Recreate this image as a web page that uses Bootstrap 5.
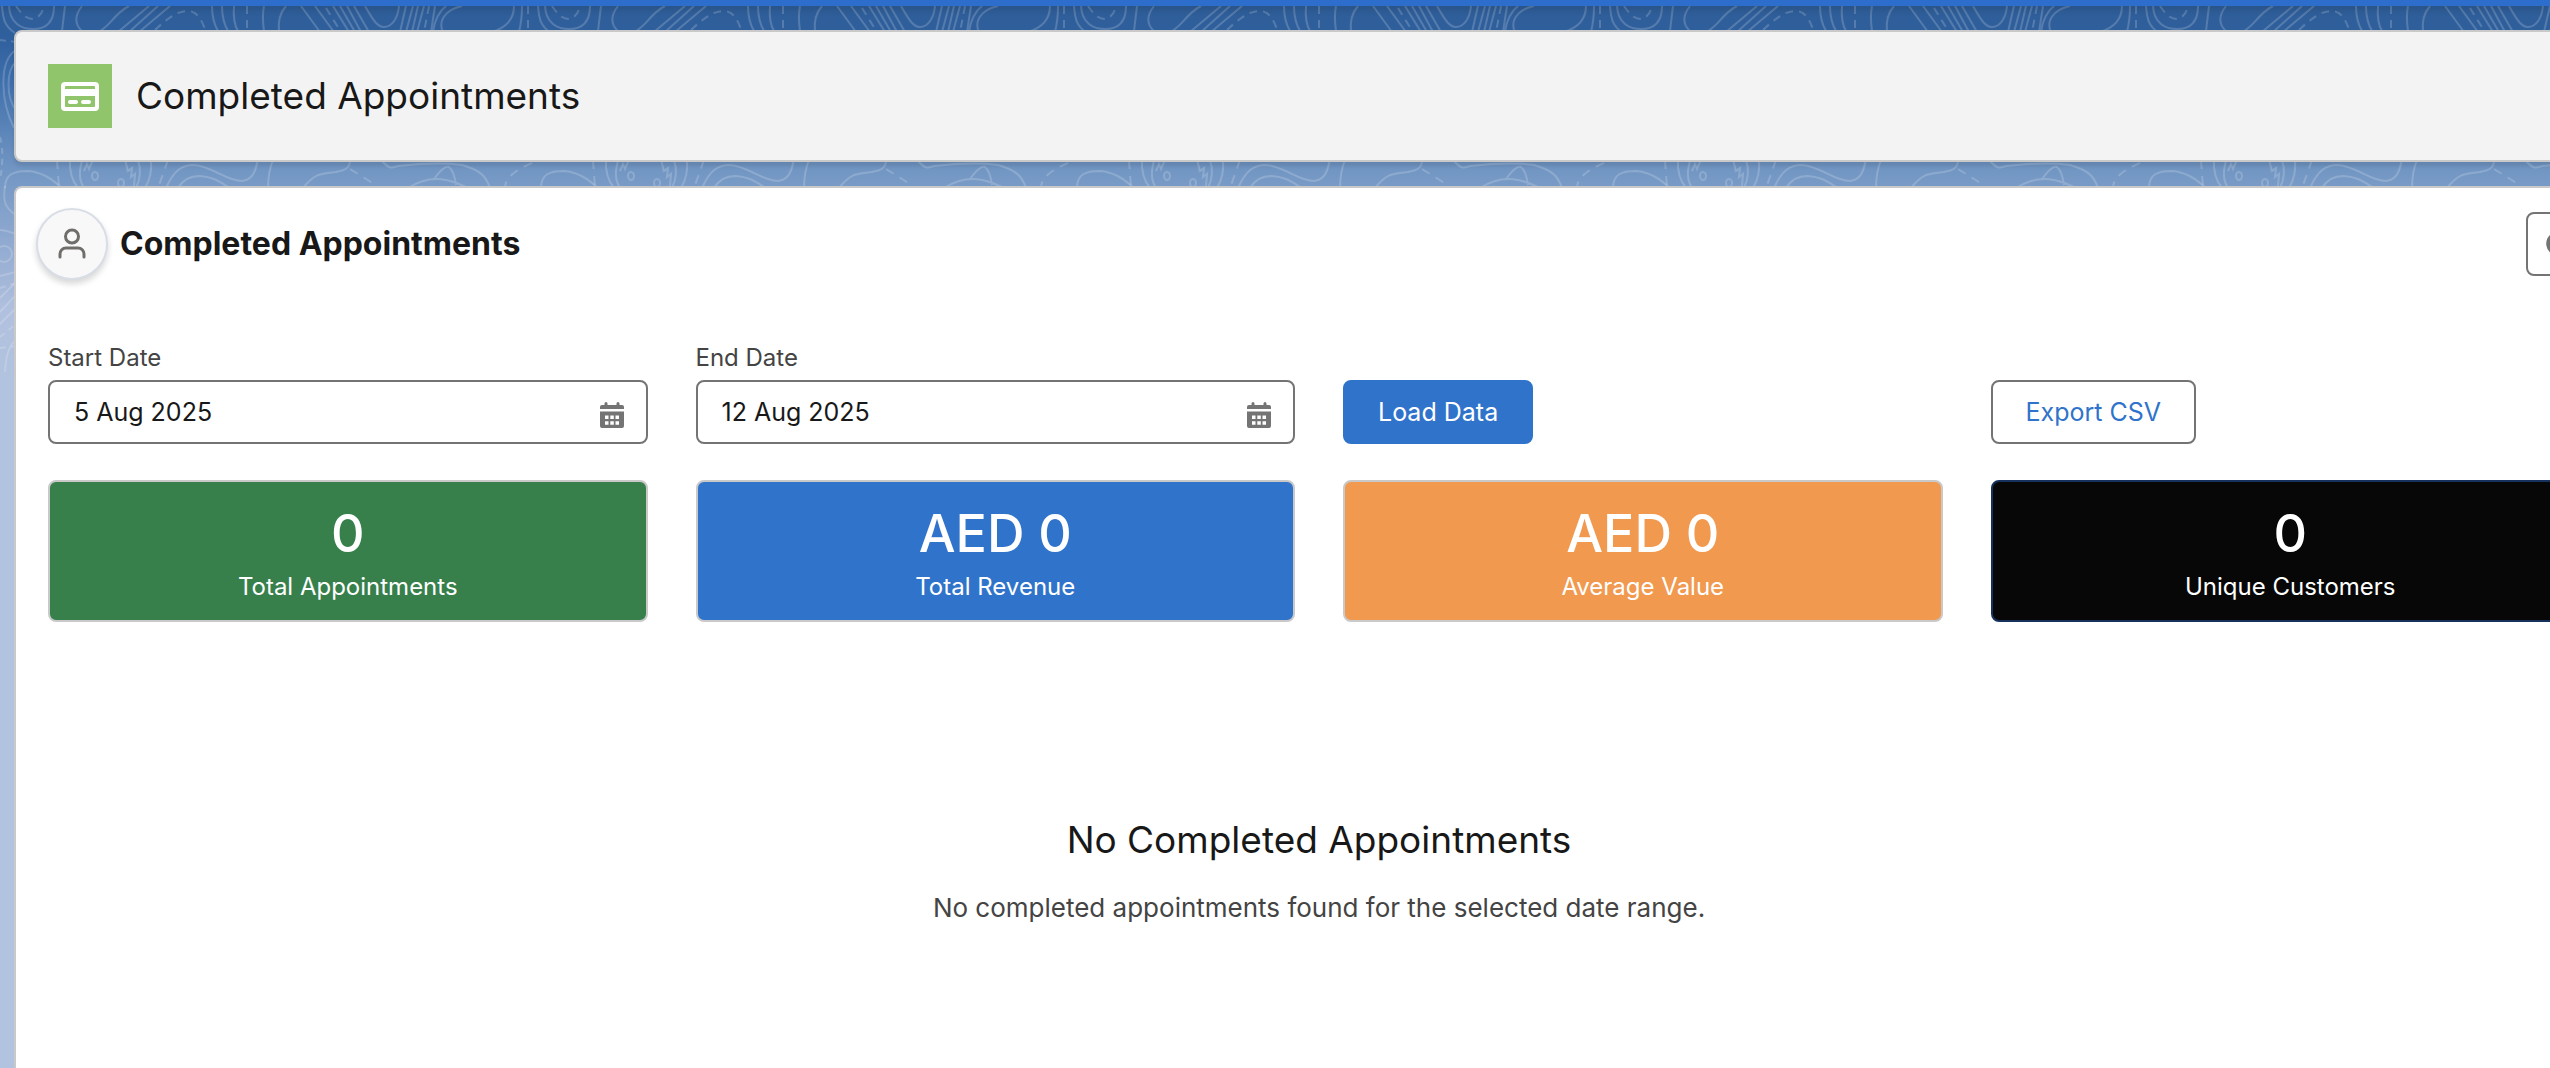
<!DOCTYPE html>
<html lang="en">
<head>
<meta charset="utf-8">
<meta name="viewport" content="width=device-width, initial-scale=1">
<title>Completed Appointments</title>
<link href="https://cdn.jsdelivr.net/npm/bootstrap@5.3.0/dist/css/bootstrap.min.css" rel="stylesheet">
<style>
  :root {
    --brand: #3073cb;
    --line: #c9c9c9;
    --control-line: #747474;
    --ink: #181818;
    --ink-soft: #444444;
  }
  body {
    font-family: Inter, "Liberation Sans", sans-serif;
    font-size: 24px;
    line-height: 36px;
    color: var(--ink);
    background: #b1c3df;
    overflow: hidden;
  }
  .top-strip { height: 6px; background: #2d6dcc; box-shadow: 0 2px 8px rgba(0, 0, 0, .2); z-index: 1; }
  .backdrop {
    height: 372px;
    background: linear-gradient(#2f5e99 0, #2f5f9c 36px, #3f6fab 80px, #7296c3 170px, #8fa9d0 240px, #b1c0de 310px, #b1c3df);
    z-index: -1;
  }
  /* the console area is wider than the window and runs off its right side */
  .console { padding: 24px 14px 0; gap: 24px; margin-right: -88px; }
  .panel { border: 2px solid var(--line); border-radius: 8px; }
  .page-header { background: #f3f3f3; padding: 32px; gap: 24px; box-shadow: 0 4px 4px rgba(0, 0, 0, .1); }
  .page-header h1 { font-size: 37px; line-height: 56px; font-weight: 400; }
  .page-icon { width: 64px; height: 64px; background: #91c56c; }
  .work-panel { background: #fff; border-bottom: 0; border-radius: 8px 8px 0 0; }
  .work-head { padding: 20px 32px 60px 20px; gap: 12px; }
  .work-head h2 { font-size: 32px; line-height: 48px; font-weight: 700; }
  .avatar-ring { width: 72px; height: 72px; background: #f8f8f8; border: 2px solid #d8dde6; box-shadow: 0 4px 6px rgba(0, 0, 0, .16); }
  .btn-refresh, .btn-tool, .date-box { height: 64px; border: 2px solid var(--control-line); border-radius: 8px; }
  .btn-refresh { width: 64px; background: #fff; color: var(--control-line); padding: 0 0 0 18px; }
  .btn-tool { font-size: 25px; padding: 0 33px; color: var(--brand); background: #fff; }
  .btn-tool.filled { color: #fff; background: var(--brand); border-color: var(--brand); }
  .work-body { padding: 0 32px; }
  .work-body .row { --bs-gutter-x: 48px; }
  .field-name { color: var(--ink-soft); margin-bottom: 4px; }
  .date-box { font-size: 25px; padding: 0 64px 0 24px; color: var(--ink); background: #fff; }
  .date-icon { right: 24px; top: 22px; color: var(--control-line); }
  .stat-row { margin-top: 36px; }
  .stat { padding: 16px; color: #fff; }
  .stat-number { font-size: 52px; line-height: 72px; font-weight: 500; }
  .stat-name { line-height: 34px; }
  .stat.green { background: #37804c; }
  .stat.blue { background: var(--brand); }
  .stat.orange { background: #f0994f; }
  .stat.black { background: #070707; border-color: #16325c; }
  .empty-note { padding-top: 190px; }
  .empty-note h3 { font-size: 37px; line-height: 56px; font-weight: 400; margin-bottom: 20px; }
  .empty-note p { font-size: 26px; line-height: 40px; color: var(--ink-soft); }
</style>
</head>
<body class="min-vh-100 d-flex flex-column position-relative">

<div class="backdrop position-absolute top-0 start-0 w-100">
  <svg width="100%" height="372" aria-hidden="true">
    <defs>
      <pattern id="contours" width="536" height="372" patternUnits="userSpaceOnUse">
        <g fill="none" stroke="#fff" stroke-opacity=".18" stroke-width="2">
          <path d="M2 6C3 18 4 26 15 33M9 6C10 24 22 29 33 29C48 29 54 20 54 6M65 6L62 31M82 6C74 16 75 25 82 31M129 6C114 14 112 24 100 31M149 6L118 32M158 6L129 32M170 6L139 32"/>
          <path d="M212 6C212 18 215 26 218 31M222 6C222 18 225 26 228 31M234 6C233 18 235 26 238 31M264 6C262 16 263 24 264 31M286 6C279 14 278 22 279 31"/>
          <path d="M301 6L320 32M315 6L334 32M333 6L349 32M340 6L355 32M347 6L361 32M354 6L369 32M365 6C374 22 378 27 384 27C392 27 398 18 399 6M406 6L400 32M413 6L406 32M418 6L412 32M424 6L417 32M435 6L431 32M446 6C436 14 434 24 433 32M462 6C444 10 438 22 443 32M514 6C514 20 505 28 492 32M522 6C522 16 521 24 519 32"/>
          <path stroke-dasharray="8 6" d="M16 6C22 15 27 19 33 19C39 18 43 12 44 6M155 30C172 14 180 11 188 11C197 11 202 20 206 32M247 6V32M326 8L341 32M429 6L424 32M528 6V32"/>
          <path d="M5 188C5 174 14 171 28 171C42 172 52 179 62 188M70 158C69 172 73 182 78 188M83 158C78 172 80 182 84 188M84 171L87 164L89 169L93 160M125 160L128 171L132 168L131 177L135 174L134 186M138 160C142 172 140 180 136 188M151 160C152 172 150 180 145 188"/>
          <ellipse cx="95" cy="176" rx="3" ry="4"/><ellipse cx="121" cy="183" rx="3" ry="4"/>
          <path d="M166 188C174 170 182 165 194 165C212 166 226 181 242 181C252 180 256 172 258 158M178 188C184 178 192 176 200 176C214 177 220 182 230 188M273 160C269 170 268 180 268 188M303 188C316 172 322 174 336 172C346 170 350 168 350 160M381 160C390 170 392 168 398 166C416 164 440 162 462 165C480 170 486 176 490 188M434 179C442 168 446 166 449 167C453 170 455 178 456 185M408 188C424 178 436 178 446 180C456 182 460 184 468 188"/>
          <path stroke-dasharray="9 7" d="M57 160L59 188M168 160L158 188M350 169L374 184M532 163C520 168 505 176 505 188"/>
        </g>
      </pattern>
    </defs>
    <rect width="100%" height="372" fill="url(#contours)"/>
    <g fill="none" stroke="#fff" stroke-opacity=".18" stroke-width="2">
      <path d="M16 50C-1 60 0 100 14 128M16 62C6 70 6 98 16 110M5 186C3 200 4 206 14 214M0 230C5 230 10 232 16 234M0 276L16 272M0 298L16 282M0 312L16 295M0 324L16 308M5 372C6 354 10 344 16 340"/>
      <circle cx="4" cy="254" r="8"/>
      <path stroke-dasharray="6 5" d="M0 40L16 42M0 137C4 150 2 170 0 180M0 288L16 283M0 337L16 324M0 348L16 346"/>
    </g>
  </svg>
</div>

<div class="top-strip position-relative"></div>

<main class="console d-flex flex-column flex-grow-1">
  <header class="panel page-header d-flex align-items-center">
    <svg class="page-icon flex-shrink-0" viewBox="0 0 64 64" aria-hidden="true">
      <path fill="#fff" fill-rule="evenodd" d="M17 18H47A4 4 0 0 1 51 22V43A4 4 0 0 1 47 47H17A4 4 0 0 1 13 43V22A4 4 0 0 1 17 18ZM18 22A1 1 0 0 0 17 23V25H47V23A1 1 0 0 0 46 22ZM17 32V42A1 1 0 0 0 18 43H46A1 1 0 0 0 47 42V32Z"/>
      <path stroke="#fff" stroke-width="4" stroke-linecap="round" d="M22 38H28M35 38H41"/>
    </svg>
    <h1 class="mb-0">Completed Appointments</h1>
  </header>

  <section class="panel work-panel flex-grow-1">
    <div class="work-head d-flex align-items-center">
      <span class="avatar-ring rounded-circle d-flex align-items-center justify-content-center flex-shrink-0">
        <svg width="32" height="32" viewBox="0 0 32 32" fill="none" stroke="#706e6b" stroke-width="3" stroke-linecap="round" aria-hidden="true">
          <circle cx="16" cy="8.500" r="6.500"/>
          <path d="M4 29V26A6 6 0 0 1 10 20H22A6 6 0 0 1 28 26V29"/>
        </svg>
      </span>
      <h2 class="mb-0">Completed Appointments</h2>
      <button type="button" class="btn-refresh ms-auto d-flex align-items-center" aria-label="Refresh">
        <svg width="24" height="24" viewBox="0 0 24 24" fill="none" stroke="currentColor" stroke-width="4" aria-hidden="true">
          <path d="M21 7A10 10 0 1 0 22 14M22 2V9H15"/>
        </svg>
      </button>
    </div>

    <div class="work-body">
      <div class="row row-cols-4 align-items-end">
        <div class="col">
          <label for="start-date" class="field-name d-block">Start Date</label>
          <div class="position-relative">
            <input id="start-date" type="text" class="date-box w-100 d-block" value="5 Aug 2025">
            <svg class="date-icon position-absolute" width="24" height="26" viewBox="0 0 24 26" fill="currentColor" aria-hidden="true">
              <path d="M2 3H4.500V1.500A1.500 1.500 0 0 1 7.500 1.500V3H16.500V1.500A1.500 1.500 0 0 1 19.500 1.500V3H22A2 2 0 0 1 24 5V7H0V5A2 2 0 0 1 2 3Z"/>
              <path fill-rule="evenodd" d="M0 9.500H24V24A2 2 0 0 1 22 26H2A2 2 0 0 1 0 24ZM5 13.500V17H8.500V13.500ZM10.300 13.500V17H13.800V13.500ZM15.500 13.500V17H19V13.500ZM5 19.300V22.800H8.500V19.300ZM10.300 19.300V22.800H13.800V19.300ZM15.500 19.300V22.800H19V19.300Z"/>
            </svg>
          </div>
        </div>
        <div class="col">
          <label for="end-date" class="field-name d-block">End Date</label>
          <div class="position-relative">
            <input id="end-date" type="text" class="date-box w-100 d-block" value="12 Aug 2025">
            <svg class="date-icon position-absolute" width="24" height="26" viewBox="0 0 24 26" fill="currentColor" aria-hidden="true">
              <path d="M2 3H4.500V1.500A1.500 1.500 0 0 1 7.500 1.500V3H16.500V1.500A1.500 1.500 0 0 1 19.500 1.500V3H22A2 2 0 0 1 24 5V7H0V5A2 2 0 0 1 2 3Z"/>
              <path fill-rule="evenodd" d="M0 9.500H24V24A2 2 0 0 1 22 26H2A2 2 0 0 1 0 24ZM5 13.500V17H8.500V13.500ZM10.300 13.500V17H13.800V13.500ZM15.500 13.500V17H19V13.500ZM5 19.300V22.800H8.500V19.300ZM10.300 19.300V22.800H13.800V19.300ZM15.500 19.300V22.800H19V19.300Z"/>
            </svg>
          </div>
        </div>
        <div class="col"><button type="button" class="btn-tool filled d-block">Load Data</button></div>
        <div class="col"><button type="button" class="btn-tool d-block">Export CSV</button></div>
      </div>

      <div class="row row-cols-4 stat-row text-center">
        <div class="col"><div class="panel stat green"><div class="stat-number">0</div><div class="stat-name">Total Appointments</div></div></div>
        <div class="col"><div class="panel stat blue"><div class="stat-number">AED 0</div><div class="stat-name">Total Revenue</div></div></div>
        <div class="col"><div class="panel stat orange"><div class="stat-number">AED 0</div><div class="stat-name">Average Value</div></div></div>
        <div class="col"><div class="panel stat black"><div class="stat-number">0</div><div class="stat-name">Unique Customers</div></div></div>
      </div>

      <div class="empty-note text-center">
        <h3>No Completed Appointments</h3>
        <p class="mb-0">No completed appointments found for the selected date range.</p>
      </div>
    </div>
  </section>
</main>

<script src="https://cdn.jsdelivr.net/npm/bootstrap@5.3.0/dist/js/bootstrap.bundle.min.js"></script>
</body>
</html>
